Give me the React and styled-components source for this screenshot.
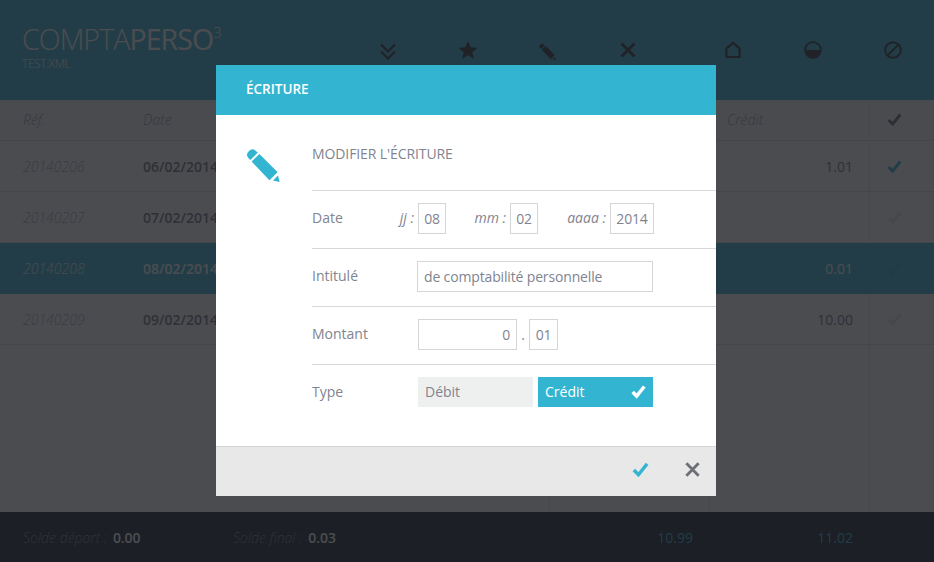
import React from "react";
import styled, { createGlobalStyle } from "styled-components";

const accent = "#33b5d1";
const soft = "#7f8490";

const GlobalStyle = createGlobalStyle`
  html, body {
    margin: 0;
    padding: 0;
    height: 100%;
    overflow: hidden;
    background: #fff;
    font-family: "Open Sans", "Noto Sans", sans-serif;
  }
  * { box-sizing: border-box; }
`;

const PencilIcon = ({ size = 36, color = "currentColor" }) => (
  <svg width={size} height={size} viewBox="0 0 36 36" fill={color}>
    <path d="M11.8 4.6 L9.6 2.8 A4.8 4.8 0 0 0 3 3 L2.6 3.4 A4.8 4.8 0 0 0 2.4 10 L4.4 12 Z" />
    <path d="M13.4 6 L31 23.6 a0.8 0.8 0 0 1 0 1.1 L24 31.8 a0.8 0.8 0 0 1 -1.1 0 L5.6 13.6 Z" />
    <path d="M32 27.6 L33.6 34 L27 32.6 Z" />
  </svg>
);

const CheckIcon = ({ size = 18, color = "currentColor", weight = 3.6 }) => (
  <svg width={size} height={size} viewBox="0 0 18 18" fill="none" stroke={color} strokeWidth={weight}>
    <path d="M2 9.5 L6.8 14.5 L16 3" />
  </svg>
);

const CrossIcon = ({ size = 18, color = "currentColor" }) => (
  <svg width={size} height={size} viewBox="0 0 18 18" fill="none" stroke={color} strokeWidth="3">
    <path d="M2.5 2.5 L15.5 15.5 M15.5 2.5 L2.5 15.5" />
  </svg>
);

const ChevronsIcon = () => (
  <svg width="18" height="18" viewBox="0 0 18 18" fill="none" stroke="currentColor" strokeWidth="2.2">
    <path d="M2 1.5 L9 8.5 L16 1.5 M2 8.5 L9 15.5 L16 8.5" />
  </svg>
);

const StarIcon = () => (
  <svg width="20" height="20" viewBox="0 0 20 20" fill="currentColor">
    <path d="M10 1 L12.7 7.2 L19.4 7.8 L14.3 12.2 L15.9 18.8 L10 15.3 L4.1 18.8 L5.7 12.2 L0.6 7.8 L7.3 7.2 Z" />
  </svg>
);

const HouseIcon = () => (
  <svg width="18" height="18" viewBox="0 0 18 18" fill="none" stroke="currentColor" strokeWidth="2.2">
    <path d="M2.4 16 V7.6 L9 1.8 L15.6 7.6 V16 Z" />
  </svg>
);

const HalfIcon = () => (
  <svg width="18" height="18" viewBox="0 0 18 18">
    <circle cx="9" cy="9" r="7.9" fill="none" stroke="currentColor" strokeWidth="1.8" />
    <path d="M1 9 H17 A8 8 0 0 1 1 9 Z" fill="currentColor" />
  </svg>
);

const BanIcon = () => (
  <svg width="18" height="18" viewBox="0 0 18 18" fill="none" stroke="currentColor" strokeWidth="2">
    <circle cx="9" cy="9" r="7.8" />
    <path d="M3.6 14.4 L14.4 3.6" />
  </svg>
);

const rows = [
  { ref: "20140206", date: "06/02/2014", credit: "1.01", checked: true },
  { ref: "20140207", date: "07/02/2014", credit: "" },
  { ref: "20140208", date: "08/02/2014", credit: "0.01", selected: true },
  { ref: "20140209", date: "09/02/2014", credit: "10.00" },
];

const rowCheckColor = (r) => {
  if (r.checked) return accent;
  return r.selected ? "#2fa8c2" : "#e4e4e6";
};

const App = () => {
  return (
    <Page>
      <GlobalStyle />
      <Header>
        <Brand>
          <Logo>
            COMPTA<b>PERSO</b>
            <sup>3</sup>
          </Logo>
          <FileName>TEST.XML</FileName>
        </Brand>
        <Toolbar>
          <ToolButton $drop={3}><ChevronsIcon /></ToolButton>
          <ToolButton><StarIcon /></ToolButton>
          <ToolButton $drop={3}><PencilIcon size={18} /></ToolButton>
          <ToolButton><CrossIcon /></ToolButton>
        </Toolbar>
        <SideTools>
          <ToolButton><HouseIcon /></ToolButton>
          <ToolButton><HalfIcon /></ToolButton>
          <ToolButton><BanIcon /></ToolButton>
        </SideTools>
      </Header>

      <Table>
        <HeadRow>
          <RefHead>Réf.</RefHead>
          <DateHead>Date</DateHead>
          <Wide />
          <AmountHead />
          <AmountHead>Crédit</AmountHead>
          <CheckCell><CheckIcon size={15} color="#6a6c72" /></CheckCell>
        </HeadRow>
        {rows.map((r) => (
          <Row key={r.ref} $selected={r.selected}>
            <RefCell $selected={r.selected}>{r.ref}</RefCell>
            <DateCell>{r.date}</DateCell>
            <Wide />
            <Amount />
            <Amount>{r.credit}</Amount>
            <CheckCell>
              <CheckIcon size={15} color={rowCheckColor(r)} />
            </CheckCell>
          </Row>
        ))}
        <Filler>
          <Wide />
          <Amount />
          <Amount />
          <CheckCell />
        </Filler>
      </Table>

      <Footer>
        <Balance>
          <BalanceItem>Solde départ :<strong>0.00</strong></BalanceItem>
          <BalanceItem>Solde final :<strong>0.03</strong></BalanceItem>
        </Balance>
        <Total>10.99</Total>
        <Total>11.02</Total>
        <TotalEnd />
      </Footer>

      <Overlay>
        <Modal>
          <ModalHeader>ÉCRITURE</ModalHeader>
          <ModalBody>
            <ModalIcon><PencilIcon size={36} color={accent} /></ModalIcon>
            <Form>
              <FormTitle>MODIFIER L'ÉCRITURE</FormTitle>
              <FormRow>
                <Label>Date</Label>
                <DateGroup>
                  <Hint $width={64}>jj :</Hint>
                  <Field $width={28} defaultValue="08" readOnly />
                  <Hint $width={64}>mm :</Hint>
                  <Field $width={28} defaultValue="02" readOnly />
                  <Hint $width={72}>aaaa :</Hint>
                  <Field $width={44} defaultValue="2014" readOnly />
                </DateGroup>
              </FormRow>
              <FormRow>
                <Label>Intitulé</Label>
                <Field $width={236} $offset={-1} $align="left" defaultValue="de comptabilité personnelle" readOnly />
              </FormRow>
              <FormRow>
                <Label>Montant</Label>
                <Field $width={99} $align="right" defaultValue="0" readOnly />
                <Dot>.</Dot>
                <Field $width={29} defaultValue="01" readOnly />
              </FormRow>
              <FormRow>
                <Label>Type</Label>
                <TypeGroup>
                  <TypeOption>Débit</TypeOption>
                  <TypeOption $active>
                    Crédit
                    <CheckIcon size={15} color="#fff" weight={4.2} />
                  </TypeOption>
                </TypeGroup>
              </FormRow>
            </Form>
          </ModalBody>
          <ModalFooter>
            <FooterButton><CheckIcon size={17} color={accent} /></FooterButton>
            <FooterButton><CrossIcon size={17} color="#6d6f78" /></FooterButton>
          </ModalFooter>
        </Modal>
      </Overlay>
    </Page>
  );
};

export default App;

const Page = styled.div`
  position: relative;
  display: flex;
  flex-direction: column;
  width: 934px;
  height: 562px;
  overflow: hidden;
  background: #fff;
`;

const Header = styled.header`
  display: flex;
  flex: 0 0 100px;
  background: ${accent};
  color: #28303a;
`;

const Brand = styled.div`
  flex: 0 0 249px;
  padding: 24px 0 0 22px;
  border-right: 1px solid #31aeca;
  color: #fff;
`;

const Logo = styled.div`
  font-size: 28.5px;
  font-weight: 300;
  line-height: 30px;
  letter-spacing: -0.9px;

  b {
    font-weight: 400;
  }

  sup {
    font-size: 15px;
    line-height: 0;
    vertical-align: 12px;
    letter-spacing: 0;
  }
`;

const FileName = styled.div`
  margin-top: 3px;
  font-size: 12px;
  font-weight: 300;
  line-height: 14px;
  letter-spacing: -0.4px;
`;

const Toolbar = styled.nav`
  display: flex;
  flex: 0 0 430px;
  align-items: center;
  padding-left: 99px;
  border-right: 1px solid #31aeca;
`;

const SideTools = styled.nav`
  display: flex;
  flex: 1;
  align-items: center;
  padding-left: 14px;
`;

const ToolButton = styled.div`
  display: flex;
  flex: 0 0 80px;
  align-items: center;
  justify-content: center;
  padding-top: ${(p) => p.$drop || 0}px;
`;

const Table = styled.main`
  display: flex;
  flex: 1;
  flex-direction: column;
  background: #fff;
`;

const HeadRow = styled.div`
  display: flex;
  flex: 0 0 41px;
  align-items: center;
  padding-bottom: 2px;
  background: #fafafa;
  border-bottom: 1px solid #e2e2e4;
  font-style: italic;
  font-size: 14px;
  color: #96989f;
`;

const Row = styled.div`
  display: flex;
  flex: 0 0 51px;
  align-items: center;
  background: ${(p) => (p.$selected ? accent : "#fff")};
  border-bottom: 1px solid ${(p) => (p.$selected ? accent : "#e2e2e4")};
  color: ${(p) => (p.$selected ? "#fff" : "#70727a")};
  font-size: 14px;
`;

const Filler = styled.div`
  display: flex;
  flex: 1;
`;

const RefHead = styled.div`
  flex: 0 0 143px;
  padding-left: 23px;
  font-weight: 300;
`;

const RefCell = styled.div`
  flex: 0 0 143px;
  padding-left: 23px;
  font-style: italic;
  font-weight: 300;
  opacity: ${(p) => (p.$selected ? 0.85 : 0.6)};
`;

const DateCell = styled.div`
  flex: 0 0 120px;
  font-weight: 600;
`;

const DateHead = styled.div`
  flex: 0 0 120px;
  font-weight: 300;
`;

const Wide = styled.div`
  align-self: stretch;
  flex: 1;
`;

const Amount = styled.div`
  flex: 0 0 160px;
  align-self: stretch;
  display: flex;
  align-items: center;
  justify-content: flex-end;
  padding-right: 16px;
  border-left: 1px solid rgba(0, 0, 0, 0.08);
  font-weight: 500;
`;

const AmountHead = styled.div`
  flex: 0 0 160px;
  padding-left: 18px;
  font-weight: 300;
`;

const CheckCell = styled.div`
  flex: 0 0 65px;
  align-self: stretch;
  display: flex;
  align-items: center;
  padding-left: 17px;
  border-left: 1px solid rgba(0, 0, 0, 0.08);
`;

const Footer = styled.footer`
  display: flex;
  flex: 0 0 50px;
  align-items: center;
  background: #141e28;
  font-size: 14px;
  color: ${accent};
`;

const Balance = styled.div`
  display: flex;
  flex: 1;
  min-width: 0;
  padding-left: 23px;
`;

const BalanceItem = styled.div`
  flex: 0 0 210px;
  font-style: italic;
  font-weight: 300;
  color: #7c808a;

  strong {
    margin-left: 6px;
    font-style: normal;
    font-weight: 600;
    letter-spacing: -0.1px;
    color: #fff;
  }
`;

const Total = styled.div`
  flex: 0 0 160px;
  align-self: stretch;
  display: flex;
  align-items: center;
  justify-content: flex-end;
  padding-right: 16px;
  border-left: 1px solid #0e1620;
`;

const TotalEnd = styled.div`
  flex: 0 0 65px;
  align-self: stretch;
  border-left: 1px solid #0e1620;
`;

const Overlay = styled.div`
  position: absolute;
  inset: 0;
  display: flex;
  align-items: center;
  justify-content: center;
  padding: 0 2px 1px 0;
  background: rgba(30, 31, 36, 0.8);
`;

const Modal = styled.div`
  display: flex;
  flex-direction: column;
  width: 500px;
  height: 431px;
  background: #fff;
`;

const ModalHeader = styled.div`
  display: flex;
  flex: 0 0 50px;
  align-items: center;
  padding: 0 0 2px 30px;
  background: ${accent};
  color: #fff;
  font-size: 13.5px;
  font-weight: 600;
`;

const ModalBody = styled.div`
  display: flex;
  flex: 1;
`;

const ModalIcon = styled.div`
  flex: 0 0 96px;
  padding: 33px 0 0 30px;
`;

const Form = styled.div`
  flex: 1;
`;

const FormTitle = styled.div`
  height: 75px;
  padding-top: 29px;
  font-size: 14px;
  font-weight: 500;
  line-height: 20px;
  letter-spacing: -0.1px;
  color: ${soft};
`;

const FormRow = styled.div`
  display: flex;
  align-items: flex-start;
  height: 58px;
  padding-top: 12px;
  border-top: 1px solid #d8d8da;
`;

const Label = styled.div`
  flex: 0 0 106px;
  font-size: 14px;
  font-weight: 500;
  line-height: 29px;
  color: ${soft};
`;

const DateGroup = styled.div`
  display: flex;
  margin-left: -64px;
`;

const Hint = styled.span`
  width: ${(p) => p.$width}px;
  padding-right: 4px;
  text-align: right;
  font-size: 14px;
  font-style: italic;
  line-height: 29px;
  color: ${soft};
`;

const Field = styled.input`
  width: ${(p) => p.$width}px;
  height: 31px;
  margin-left: ${(p) => p.$offset || 0}px;
  padding: ${(p) => (p.$align ? "0 6px" : "0")};
  border: 1px solid #d6d6d8;
  border-radius: 0;
  outline: none;
  background: #fff;
  font-family: inherit;
  font-size: 14px;
  font-weight: 500;
  letter-spacing: -0.15px;
  text-align: ${(p) => p.$align || "center"};
  color: ${soft};
`;

const Dot = styled.span`
  width: 12px;
  text-align: center;
  font-size: 14px;
  line-height: 31px;
  color: ${soft};
`;

const TypeGroup = styled.div`
  display: flex;
  gap: 5px;
`;

const TypeOption = styled.div`
  display: flex;
  align-items: center;
  justify-content: space-between;
  width: 115px;
  height: 30px;
  padding: 0 7px 2px;
  background: ${(p) => (p.$active ? accent : "#eeefef")};
  color: ${(p) => (p.$active ? "#fff" : soft)};
  font-size: 14px;
  font-weight: 500;
`;

const ModalFooter = styled.div`
  display: flex;
  flex: 0 0 50px;
  align-items: center;
  justify-content: flex-end;
  gap: 35px;
  padding: 0 15px 4px 0;
  background: #e8e8e8;
  border-top: 1px solid #d4d4d6;
`;

const FooterButton = styled.div`
  display: flex;
`;
